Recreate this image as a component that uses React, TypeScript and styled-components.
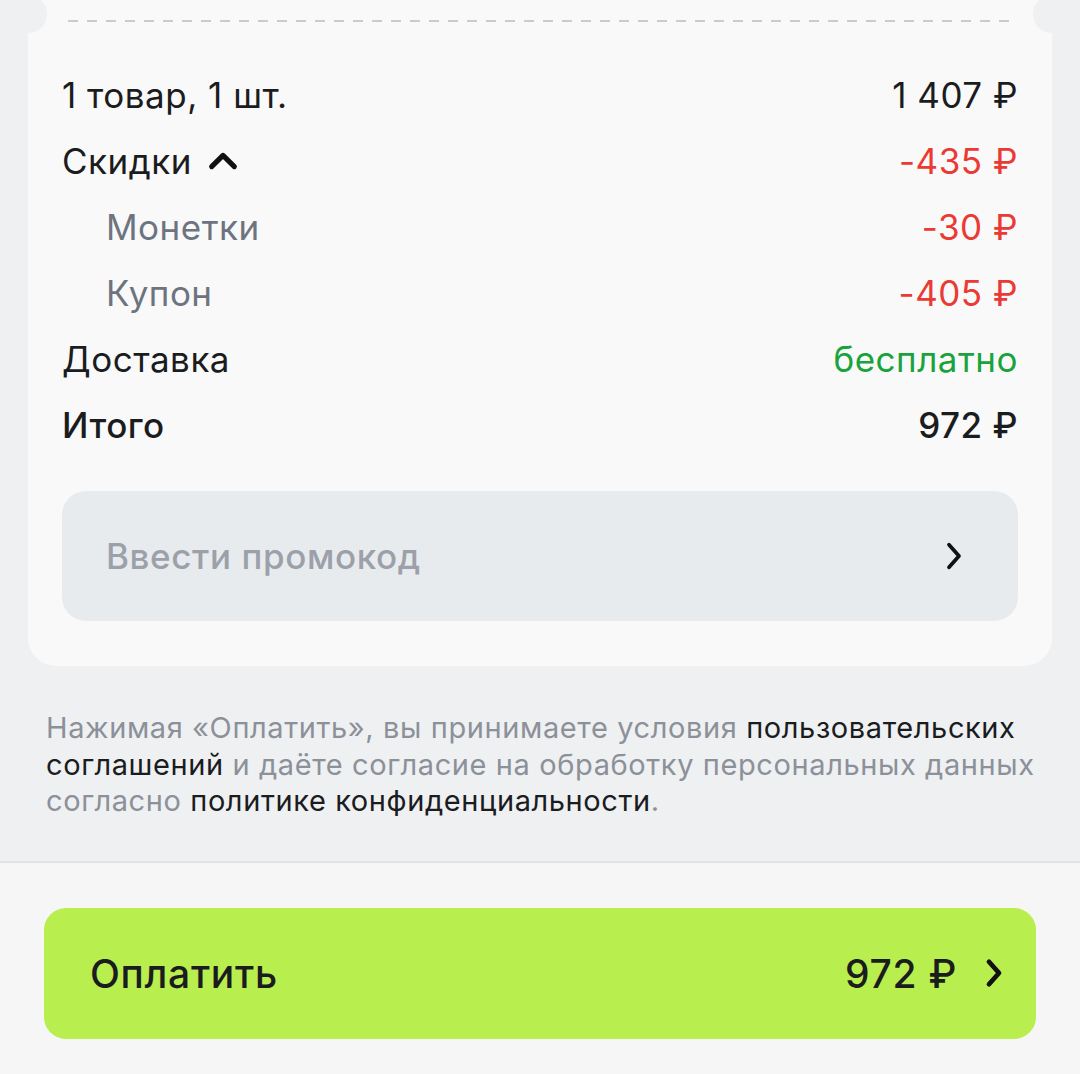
import styled, { createGlobalStyle } from 'styled-components';

const GlobalStyle = createGlobalStyle`
  html, body {
    margin: 0;
    padding: 0;
    background: #eef0f2;
  }
  body {
    font-family: Inter, "Noto Sans", "Liberation Sans", sans-serif;
    color: #1b1c1e;
    -webkit-font-smoothing: antialiased;
  }
`;

const Page = styled.div`
  display: flex;
  flex-direction: column;
  min-height: 1074px;
  background: #eef0f2;
  overflow: hidden;
`;

const CardWrap = styled.div`
  padding: 0 28px;
`;

const Card = styled.div`
  position: relative;
  background: #f9f9f9;
  border-radius: 0 0 28px 28px;
  padding: 20px 34px 45px;
`;

// receipt cutouts at the top edge
const Notch = styled.div<{ side: 'left' | 'right' }>`
  position: absolute;
  top: -5px;
  ${p => p.side}: -19px;
  width: 38px;
  height: 38px;
  border-radius: 50%;
  background: #eef0f2;
`;

const Dashes = styled.div`
  height: 2px;
  margin: 0 6px 40px;
  background-image: linear-gradient(to right, #c8cbd0 0 10px, transparent 10px 100%);
  background-size: 19px 2px;
  background-repeat: repeat-x;
`;

const Rows = styled.div`
  display: flex;
  flex-direction: column;
`;

const Row = styled.div<{ indent?: boolean }>`
  display: flex;
  align-items: center;
  justify-content: space-between;
  height: 66px;
  padding-left: ${p => (p.indent ? '44px' : '0')};
  font-size: 35px;
  letter-spacing: 0.5px;
`;

const Label = styled.span<{ muted?: boolean; strong?: boolean }>`
  display: flex;
  align-items: center;
  gap: 14px;
  color: ${p => (p.muted ? '#6d7480' : '#1b1c1e')};
  font-weight: ${p => (p.strong ? 500 : 400)};
`;

const Amount = styled.span<{ tone?: 'red' | 'green'; strong?: boolean }>`
  color: ${p => (p.tone === 'red' ? '#eb3a34' : p.tone === 'green' ? '#19a33c' : '#1b1c1e')};
  font-weight: ${p => (p.strong ? 500 : 400)};
`;

const Promo = styled.button`
  display: flex;
  align-items: center;
  justify-content: space-between;
  width: 100%;
  height: 130px;
  margin-top: 33px;
  padding: 0 49px 0 44px;
  border: none;
  border-radius: 24px;
  background: #e8ebee;
  font-family: inherit;
  font-size: 35px;
  letter-spacing: 0.6px;
  font-weight: 500;
  color: #9ca1a9;
  text-align: left;
  cursor: pointer;
`;

const Legal = styled.p`
  margin: 44px 0 0;
  padding: 0 30px 0 46px;
  font-size: 29px;
  letter-spacing: 0.6px;
  line-height: 36.5px;
  color: #8c9199;
  white-space: nowrap;
`;

const Link = styled.span`
  color: #1b1c1e;
`;

const Footer = styled.div`
  flex: 1;
  margin-top: 41px;
  padding: 45px 44px 34px;
  border-top: 2px solid #dfe2e6;
  background: #f6f6f6;
`;

const PayButton = styled.button`
  display: flex;
  align-items: center;
  justify-content: space-between;
  width: 100%;
  height: 131px;
  padding: 0 27px 0 46px;
  border: none;
  border-radius: 22px;
  background: #b9ee4f;
  font-family: inherit;
  font-size: 39px;
  letter-spacing: 0.7px;
  font-weight: 500;
  color: #1b1c1e;
  cursor: pointer;
`;

const PayRight = styled.span`
  display: flex;
  align-items: center;
  gap: 22px;
`;

const Caret = ({ dir, size, stroke }: { dir: 'up' | 'right'; size: number; stroke: number }) => (
  <svg width={size} height={size} viewBox="0 0 24 24" fill="none">
    <path
      d={dir === 'up' ? 'M4 16 L12 8 L20 16' : 'M8 3 L16 12 L8 21'}
      stroke="#111"
      strokeWidth={stroke}
      strokeLinecap="round"
      strokeLinejoin="round"
    />
  </svg>
);

function App() {
  return (
    <Page>
      <GlobalStyle />
      <CardWrap>
        <Card>
          <Notch side="left" />
          <Notch side="right" />
          <Dashes />
          <Rows>
            <Row>
              <Label>1 товар, 1 шт.</Label>
              <Amount>1 407 ₽</Amount>
            </Row>
            <Row>
              <Label>
                Скидки <Caret dir="up" size={34} stroke={3.6} />
              </Label>
              <Amount tone="red">-435 ₽</Amount>
            </Row>
            <Row indent>
              <Label muted>Монетки</Label>
              <Amount tone="red">-30 ₽</Amount>
            </Row>
            <Row indent>
              <Label muted>Купон</Label>
              <Amount tone="red">-405 ₽</Amount>
            </Row>
            <Row>
              <Label>Доставка</Label>
              <Amount tone="green">бесплатно</Amount>
            </Row>
            <Row>
              <Label strong>Итого</Label>
              <Amount strong>972 ₽</Amount>
            </Row>
          </Rows>
          <Promo>
            Ввести промокод
            <Caret dir="right" size={30} stroke={3} />
          </Promo>
        </Card>
      </CardWrap>

      <Legal>
        Нажимая «Оплатить», вы принимаете условия <Link>пользовательских</Link>
        <br />
        <Link>соглашений</Link> и даёте согласие на обработку персональных данных
        <br />
        согласно <Link>политике конфиденциальности</Link>.
      </Legal>

      <Footer>
        <PayButton>
          Оплатить
          <PayRight>
            972 ₽
            <Caret dir="right" size={30} stroke={3.8} />
          </PayRight>
        </PayButton>
      </Footer>
    </Page>
  );
}

export default App;
